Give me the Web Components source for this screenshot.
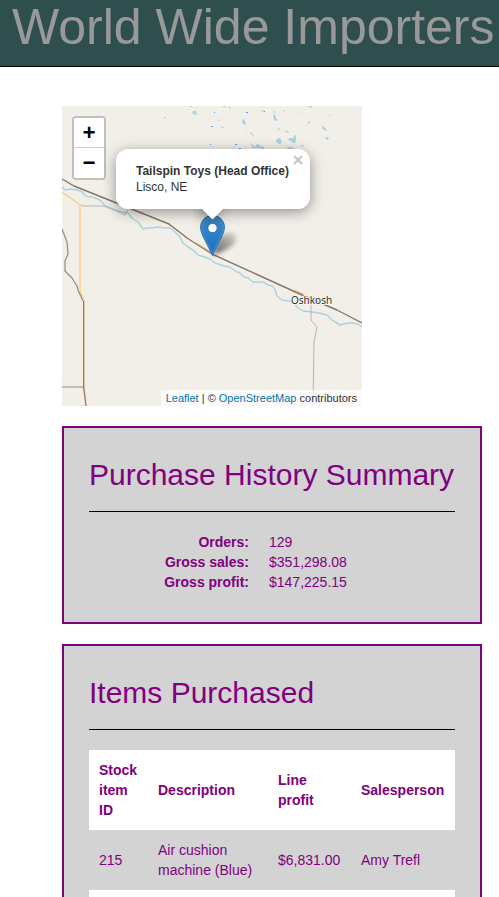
<!DOCTYPE html>
<html lang="en">
<head>
<meta charset="utf-8">
<meta name="viewport" content="width=device-width, initial-scale=1">
<title>World Wide Importers</title>
<style>
  body { margin: 0; background: #fff; color: #333; font: 14px/20px "Liberation Sans", Arial, sans-serif; }
</style>
</head>
<body>
<wwi-app></wwi-app>

<script>
const define = (name, html) => {
  const template = document.createElement('template');
  template.innerHTML = html;
  customElements.define(name, class extends HTMLElement {
    constructor() {
      super();
      this.attachShadow({ mode: 'open' }).append(template.content.cloneNode(true));
    }
  });
};

define('site-header', `
  <style>
    :host { display: block; background: darkslategray; border-bottom: 1px solid #000; padding: 0 0 12px 12px; overflow: hidden; }
    h1 { margin: 0; font-size: 50px; line-height: 54px; font-weight: 400; color: #999; white-space: nowrap; }
  </style>
  <h1><slot></slot></h1>`);

define('info-panel', `
  <style>
    :host { display: block; background: lightgray; border: 2px solid purple; color: purple; padding: 30px 25px; }
    h2 { margin: 0; padding-bottom: 20px; border-bottom: 1px solid #000; margin-bottom: 20px; font-size: 30px; line-height: 33px; font-weight: 400; }
  </style>
  <h2><slot name="title"></slot></h2>
  <slot></slot>`);

define('purchase-summary', `
  <style>
    :host { display: block; }
    dl { display: grid; grid-template-columns: 160px 1fr; column-gap: 20px; margin: 0; }
    dt { font-weight: 700; text-align: right; }
    dd { margin: 0; }
  </style>
  <dl>
    <dt>Orders:</dt><dd>129</dd>
    <dt>Gross sales:</dt><dd>$351,298.08</dd>
    <dt>Gross profit:</dt><dd>$147,225.15</dd>
  </dl>`);

define('items-table', `
  <style>
    :host { display: block; }
    table { width: 100%; border-collapse: collapse; }
    th, td { box-sizing: border-box; padding: 10px; text-align: left; vertical-align: middle; }
    tr:nth-child(odd) { background: #fff; }
    .id { width: 59px; }
    .description { width: 120px; }
    .profit { width: 83px; }
    .last { height: 40px; }
  </style>
  <table>
    <tr><th class="id" scope="col">Stock item ID</th><th class="description" scope="col">Description</th><th class="profit" scope="col">Line profit</th><th scope="col">Salesperson</th></tr>
    <tr><td>215</td><td>Air cushion machine (Blue)</td><td>$6,831.00</td><td>Amy Trefl</td></tr>
    <tr class="last"><td></td><td></td><td></td><td></td></tr>
  </table>`);

define('zoom-control', `
  <style>
    :host { display: grid; border: 2px solid rgba(0,0,0,.2); border-radius: 4px; background-clip: padding-box; }
    button { width: 30px; height: 30px; box-sizing: border-box; padding: 0; border: 0; background: #fff; color: #000; font: bold 22px/30px "Liberation Mono", monospace; cursor: pointer; }
    .in { border-bottom: 1px solid #ccc; border-radius: 2px 2px 0 0; }
    .out { border-radius: 0 0 2px 2px; }
    span { display: block; padding-top: 2px; }
  </style>
  <button class="in" type="button" title="Zoom in"><span>+</span></button>
  <button class="out" type="button" title="Zoom out"><span>&minus;</span></button>`);

define('map-popup', `
  <style>
    :host { display: block; font-size: 12px; line-height: 16px; color: #333; white-space: nowrap; }
    .box { position: relative; background: #fff; border-radius: 12px; padding: 14px 21px 14px 20px; box-shadow: 0 3px 14px rgba(0,0,0,.4); }
    .tip { width: 40px; height: 20px; margin: 0 auto; overflow: hidden; position: relative; }
    .tip::before { content: ""; display: block; width: 17px; height: 17px; margin: -10px auto 0; background: #fff; transform: rotate(45deg); box-shadow: 0 3px 14px rgba(0,0,0,.4); }
    button { position: absolute; top: 4px; right: 4px; width: 16px; height: 14px; padding: 0; border: 0; background: none; color: #c3c3c3; font: bold 16px/14px "DejaVu Sans", sans-serif; cursor: pointer; }
  </style>
  <div class="box"><slot></slot><button type="button" aria-label="Close popup">&times;</button></div>
  <div class="tip"></div>`);

define('map-marker', `
  <style>:host { display: block; } svg { display: block; overflow: visible; }</style>
  <svg width="25" height="41" viewBox="0 0 25 41" role="img" aria-label="Marker">
    <defs>
      <linearGradient id="fill" x1="0" y1="0" x2="0" y2="1"><stop offset="0" stop-color="#3f8fc9"/><stop offset="1" stop-color="#126fc6"/></linearGradient>
      <linearGradient id="edge" x1="0" y1="0" x2="0" y2="1"><stop offset="0" stop-color="#2e6c97"/><stop offset="1" stop-color="#3883b7"/></linearGradient>
      <linearGradient id="fade" x1="0" y1="1" x2="1" y2="0"><stop offset="0" stop-opacity=".6"/><stop offset=".5" stop-opacity=".36"/><stop offset="1" stop-opacity=".08"/></linearGradient>
      <filter id="soft" x="-50%" y="-50%" width="200%" height="200%"><feGaussianBlur stdDeviation="2"/></filter>
    </defs>
    <path d="M13 40 L17 26 Q25 16 33 18 Q40 22 33 30 Q26 36 13 40Z" fill="url(#fade)" filter="url(#soft)"/>
    <path d="M12.5 .6C6 .6.6 6 .6 12.5c0 2.6 1.3 6 2.1 7.900L12.500 40.200l9.800-19.800c.8-1.900 2.100-5.300 2.100-7.900C24.400 6 19 .6 12.500 .6Z" fill="url(#fill)" stroke="url(#edge)" stroke-width="1.1"/>
    <path d="M12.500 1.700C6.600 1.700 1.700 6.600 1.700 12.500c0 2.300 1.200 5.600 2 7.400L12.500 37.700l8.800-17.800c.8-1.800 2-5.100 2-7.400C23.300 6.600 18.400 1.700 12.500 1.700Z" fill="none" stroke="#fff" stroke-opacity=".13"/>
    <circle cx="12.500" cy="13" r="4.700" fill="#fff" stroke="#2b70a5" stroke-width=".9"/>
  </svg>`);

define('leaflet-map', `
  <style>
    :host { display: grid; position: relative; width: 300px; max-width: 100%; aspect-ratio: 1; overflow: hidden; background: #f2efe9; font-size: 12px; }
    .tiles { width: 100%; height: 100%; display: block; }
    zoom-control { position: absolute; left: 10px; top: 10px; }
    map-marker { position: absolute; left: 138px; top: 109px; }
    map-popup { position: absolute; left: 54px; top: 43px; }
    footer { position: absolute; right: 0; bottom: 0; padding: 0 5px; background: rgba(255,255,255,.7); font-size: 11px; line-height: 16px; white-space: nowrap; }
    a { color: #0078a8; text-decoration: none; }
  </style>
  <svg class="tiles" viewBox="0 0 300 300" fill="none" stroke-linejoin="round" aria-label="Map of Lisco and Oshkosh, Nebraska">
    <g fill="#aad3df">
      <path d="M131 5h3v1l1 2-2 1-3-2zM102 11l2 0v1h-2zM128 0h2v1h-2zM161 0h3v1h-3zM246 0h4v1l-2 1zM200 4l3 1-1 1-3-1zM211 9l2-1 1 4 2 2-2 1-2-1zM212 5l2 1-1 1-2-1zM221 4l2 1-2 1zM236 7l2 0-1 1zM268 8l1 1-2 1zM181 13l2 2 1 2-2 2-2-3zM156 13l2 1-2 1zM158 20l3 1 1 1-2 0zM216 22l2 1v1l-2 0zM223 24l4 2-1 1-3-2zM246 16l2-1v2l-2 1zM242 22l1 0-1 1zM261 20l3 3 1 2-3-1-2-2zM188 26l2 1 2 3v1l-3-3zM184 23l1 2-1 0zM263 31l3 0 1 2-2 1zM215 33l3-1 2 4-2 2-3-1-1-2zM227 32l4 0 2-3h1v5l-1 3-2 0-2-2-3-1zM239 39l2 0 1 2-3-1zM188 37l3 2 2 2 2-3 3 1 1 3h-8zM199 40l3 1v2h-3zM225 41l4 0 4 2h-7z"/>
    </g>
    <g fill="#4da6ff">
      <path d="M184 6h2v1h-2zM152 6h1v1h-1zM202 5h1v1h-1zM149 20h2v1h-2zM173 38h2v1h-2zM148 38h1v1h-1zM177 42h2v1h-2zM167 1h1v1h-1z"/>
    </g>
    <g fill="#eff2d8" opacity=".6"><circle cx="26" cy="203" r="3"/><circle cx="1" cy="276" r="4"/><circle cx="22" cy="186" r="3"/><circle cx="18" cy="297" r="3"/></g>
    <path stroke="#aad3df" stroke-width="1.500" d="M0 81 3 84 8 83 16 84 20 86 24 90 30 91 36 93 40 96 44 101 53 104 61 106 66 107 70 112 77 117 81 123 85 122 90 122 95 121 103 122 108 122 113 126 118 131 121 137 126 141 131 144 136 149 143 151 148 153 153 157 162 160 168 161 173 165 178 167 182 171 186 172 191 176 201 176 206 179 210 180 213 183 215 190 220 194 228 195 232 197 235 201 241 205 250 206 257 207 265 209 270 214 278 219 285 217 291 217 296 218 300 221"/>
    <g stroke="#b5b5b5" stroke-width="1">
      <path d="M19 99 22 100H44L55 105 63 109 66 104"/>
      <path d="M249 190V214L255 221 252 236 251 300"/>
    </g>
    <path stroke="#fcce8d" stroke-width="1.500" d="M0 86 10 93 18 99 18 185 22 194M107 118 116 125 125 131M134 137 149 146M232 184 239 187 244 190"/>
    <path stroke="#908981" stroke-width="1.200" d="M0 123 5 136 6 148 3 155 3 165 10 172 15 180 16 184 21 195M0 281H21"/>
    <path stroke="#d8bd9c" stroke-width="1.800" d="M22 195V281L24 300"/>
    <path stroke="#8f7b6a" stroke-width="1" d="M21.500 195V281L24 300"/>
    <path stroke="#85776a" stroke-width="1.400" d="M0 73 12 80 57 98 107 118 125 132 150 148 240 189 275 204 300 217"/>
    <text x="229" y="198" font-family="Noto Sans, sans-serif" font-size="10" fill="#333" stroke="#f7f5f0" stroke-width="2" paint-order="stroke">Oshkosh</text>
  </svg>
  <map-marker></map-marker>
  <map-popup><strong>Tailspin Toys (Head Office)</strong><br>Lisco, NE</map-popup>
  <zoom-control></zoom-control>
  <footer><a href="#leaflet">Leaflet</a> | © <a href="#openstreetmap">OpenStreetMap</a> contributors</footer>`);

define('wwi-app', `
  <style>
    :host { display: block; }
    main { display: grid; gap: 20px; padding: 39px 17px 20px 62px; }
  </style>
  <site-header>World Wide Importers</site-header>
  <main>
    <leaflet-map></leaflet-map>
    <info-panel><span slot="title">Purchase History Summary</span><purchase-summary></purchase-summary></info-panel>
    <info-panel><span slot="title">Items Purchased</span><items-table></items-table></info-panel>
  </main>`);
</script>
</body>
</html>
